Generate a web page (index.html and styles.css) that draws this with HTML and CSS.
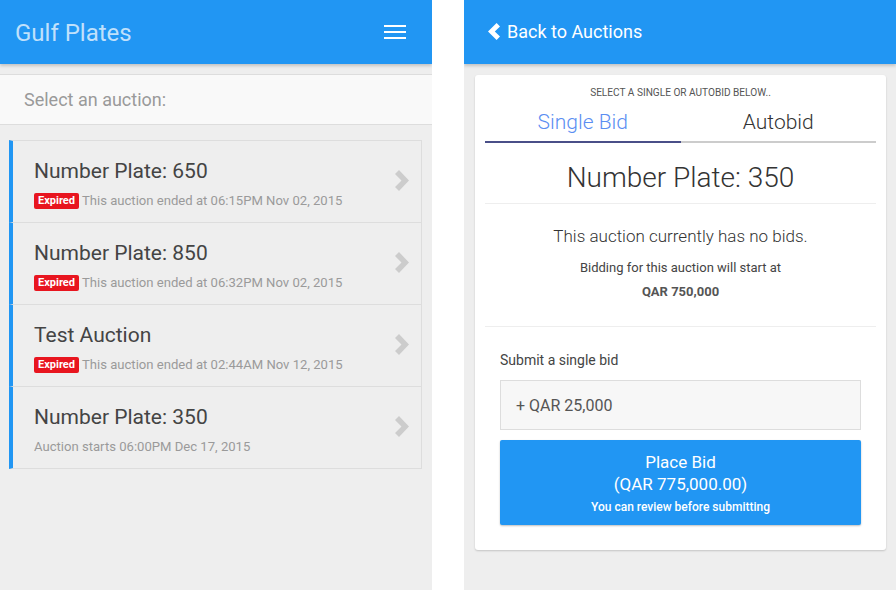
FILE: index.html
```html
<!DOCTYPE html>
<html>
<head>
<meta charset="utf-8">
<link rel="stylesheet" href="styles.css">
</head>
<body>
<div class="screens">
  <section class="panel">
    <header class="topbar">
      <span class="brand">Gulf Plates</span>
      <span class="burger"><i></i><i></i><i></i></span>
    </header>
    <div class="select-bar">Select an auction:</div>
    <ul class="list">
      <li class="item">
        <div class="item-body">
          <div class="item-title">Number Plate: 650</div>
          <div class="item-sub"><span class="badge">Expired</span>This auction ended at 06:15PM Nov 02, 2015</div>
        </div>
        <svg class="chev" width="15" height="21" viewBox="0 0 15 21"><polygon points="0,4 4,0 14,10.5 4,21 0,17 6.5,10.5" fill="#cccccc"/></svg>
      </li>
      <li class="item">
        <div class="item-body">
          <div class="item-title">Number Plate: 850</div>
          <div class="item-sub"><span class="badge">Expired</span>This auction ended at 06:32PM Nov 02, 2015</div>
        </div>
        <svg class="chev" width="15" height="21" viewBox="0 0 15 21"><polygon points="0,4 4,0 14,10.5 4,21 0,17 6.5,10.5" fill="#cccccc"/></svg>
      </li>
      <li class="item">
        <div class="item-body">
          <div class="item-title">Test Auction</div>
          <div class="item-sub"><span class="badge">Expired</span>This auction ended at 02:44AM Nov 12, 2015</div>
        </div>
        <svg class="chev" width="15" height="21" viewBox="0 0 15 21"><polygon points="0,4 4,0 14,10.5 4,21 0,17 6.5,10.5" fill="#cccccc"/></svg>
      </li>
      <li class="item">
        <div class="item-body">
          <div class="item-title">Number Plate: 350</div>
          <div class="item-sub">Auction starts 06:00PM Dec 17, 2015</div>
        </div>
        <svg class="chev" width="15" height="21" viewBox="0 0 15 21"><polygon points="0,4 4,0 14,10.5 4,21 0,17 6.5,10.5" fill="#cccccc"/></svg>
      </li>
    </ul>
  </section>

  <section class="panel">
    <header class="topbar back">
      <svg class="back-chev" width="13" height="17" viewBox="0 0 13 17"><polygon points="13,3.4 9.6,0 1,8.5 9.6,17 13,13.6 7.8,8.5" fill="#ffffff"/></svg>
      <span class="back-text">Back to Auctions</span>
    </header>
    <div class="card">
      <div class="hint">SELECT A SINGLE OR AUTOBID BELOW..</div>
      <div class="tabs">
        <div class="tab active">Single Bid</div>
        <div class="tab">Autobid</div>
      </div>
      <div class="plate">Number Plate: 350</div>
      <div class="status">
        <div class="nobids">This auction currently has no bids.</div>
        <div class="starts">Bidding for this auction will start at</div>
        <div class="amount">QAR 750,000</div>
      </div>
      <div class="form">
        <div class="label">Submit a single bid</div>
        <div class="input">+ QAR 25,000</div>
        <button class="btn">
          <span class="btn-line">Place Bid</span>
          <span class="btn-line">(QAR 775,000.00)</span>
          <span class="btn-small">You can review before submitting</span>
        </button>
      </div>
    </div>
  </section>
</div>
</body>
</html>
```
FILE: styles.css
```css
* { box-sizing: border-box; }
html, body { margin: 0; padding: 0; background: #ffffff; }
body { font-family: Roboto, "Noto Sans", Arial, sans-serif; }

.screens {
  display: flex;
  gap: 32px;
  width: 896px;
  height: 590px;
}

.panel {
  width: 432px;
  height: 590px;
  background: #eeeeee;
  overflow: hidden;
}

.topbar {
  height: 64px;
  background: #2196F3;
  display: flex;
  align-items: center;
  justify-content: space-between;
  padding: 0 26px 0 15px;
  box-shadow: 0 2px 3px rgba(0,0,0,0.18);
  position: relative;
}

.brand {
  font-size: 24px;
  color: rgba(255,255,255,0.72);
  line-height: 1;
  margin-top: 1px;
}

.burger {
  display: flex;
  flex-direction: column;
  gap: 4px;
  width: 22px;
}
.burger i {
  display: block;
  height: 2px;
  background: #ffffff;
}

.select-bar {
  margin-top: 10px;
  height: 51px;
  background: #f9f9f9;
  border-top: 1px solid #dddddd;
  border-bottom: 1px solid #dddddd;
  padding-left: 24px;
  display: flex;
  align-items: center;
  font-size: 18px;
  color: #9a9a9a;
}

.list {
  list-style: none;
  margin: 15px 10px 0 9px;
  padding: 0;
}

.item {
  height: 82px;
  display: flex;
  align-items: center;
  border: 1px solid #dddddd;
  border-left: 4px solid #2196F3;
  border-top: none;
  padding: 0 11px 0 21px;
}
.item:first-child { border-top: 1px solid #dddddd; height: 83px; }

.item-body { flex: 1; margin-top: 4px; }

.item-title {
  font-size: 21px;
  line-height: 26px;
  color: #444444;
}

.item-sub {
  margin-top: 8px;
  font-size: 13.1px;
  line-height: 18px;
  color: #9a9a9a;
  display: flex;
  align-items: center;
}

.badge {
  background: #e8151f;
  color: #ffffff;
  font-weight: 700;
  font-size: 11px;
  line-height: 16px;
  padding: 0 4px;
  border-radius: 2px;
  margin-right: 3px;
}

.chev { flex: none; margin-bottom: 2px; }

.topbar.back {
  justify-content: flex-start;
  padding-left: 23px;
}
.back-chev { margin-right: 7px; margin-top: -2px; }
.back-text {
  font-size: 18px;
  color: #ffffff;
  margin-top: -1px;
}

.card {
  margin: 11px 10px 0 11px;
  background: #ffffff;
  border-radius: 3px;
  box-shadow: 0 1px 2px rgba(0,0,0,0.18);
  padding: 12px 10px 25px;
}

.hint {
  text-align: center;
  font-size: 10.1px;
  line-height: 12px;
  color: #555555;
}

.tabs { display: flex; }
.tab {
  flex: 1;
  text-align: center;
  font-size: 21px;
  font-weight: 300;
  color: #333333;
  line-height: 26px;
  padding: 10px 0 6px;
  border-bottom: 2px solid #cccccc;
}
.tab.active {
  color: #5b8ef2;
  border-bottom-color: #4a4f88;
}

.plate {
  text-align: center;
  font-size: 28px;
  font-weight: 300;
  color: #333333;
  line-height: 34px;
  padding: 18px 0 8px;
  border-bottom: 1px solid #eeeeee;
}

.status {
  text-align: center;
  padding: 21px 0 25px;
  border-bottom: 1px solid #eeeeee;
}
.nobids {
  font-size: 17px;
  font-weight: 300;
  color: #333333;
  line-height: 22px;
}
.starts {
  margin-top: 12px;
  font-size: 13px;
  line-height: 18px;
  color: #444444;
}
.amount {
  margin-top: 6px;
  font-size: 13px;
  line-height: 18px;
  font-weight: 700;
  color: #555555;
}

.form { padding: 23px 15px 0; }
.label {
  font-size: 14px;
  line-height: 20px;
  color: #444444;
}
.input {
  margin-top: 10px;
  height: 50px;
  background: #f7f7f7;
  border: 1px solid #dddddd;
  padding-left: 15px;
  display: flex;
  align-items: center;
  font-size: 16px;
  color: #555555;
}
.btn {
  margin-top: 10px;
  width: 100%;
  height: 85px;
  border: none;
  border-radius: 2px;
  background: #2196F3;
  box-shadow: 0 1px 2px rgba(0,0,0,0.25);
  color: #ffffff;
  font-family: Roboto, "Noto Sans", Arial, sans-serif;
  display: flex;
  flex-direction: column;
  align-items: center;
  padding: 11px 0 0;
}
.btn-line {
  font-size: 17px;
  line-height: 22px;
}
.btn-small {
  font-size: 12px;
  font-weight: 500;
  line-height: 16px;
  margin-top: 4px;
}
```
